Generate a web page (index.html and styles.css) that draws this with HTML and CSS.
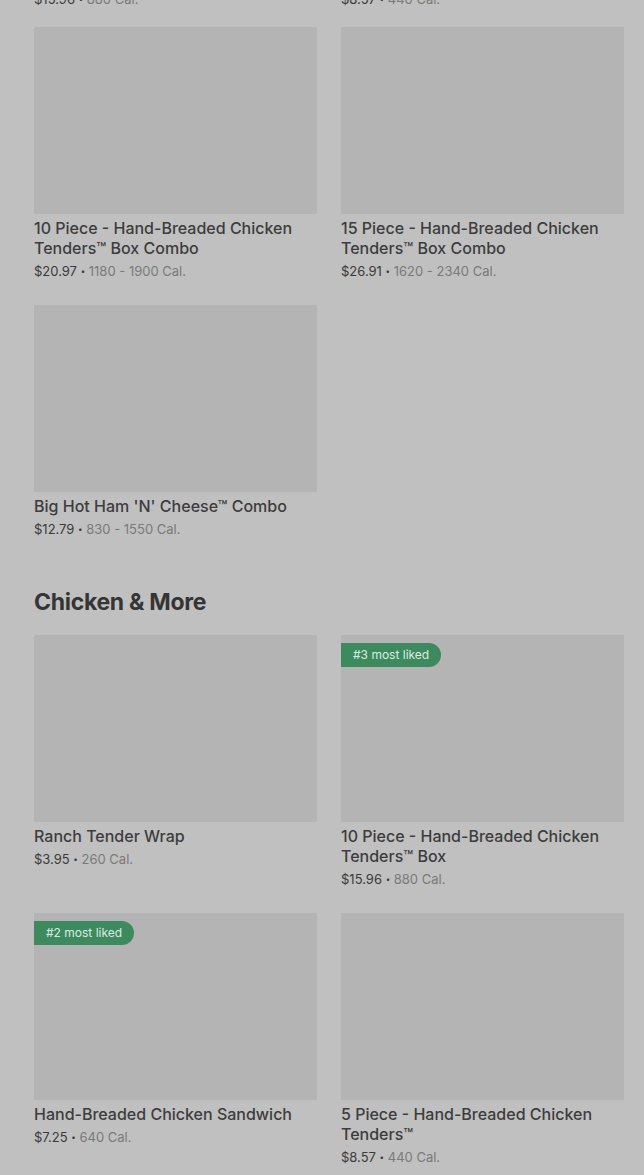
FILE: index.html
```html
<!DOCTYPE html>
<html>
<head>
    <title>Menu</title>
    <link rel="stylesheet" href="styles.css">
</head>
<body>
    <div class="menu">
        <div class="cut-row">
            <span class="price">$15.96 <span class="dot">•</span> <span class="cal">880 Cal.</span></span>
            <span class="price">$8.57 <span class="dot">•</span> <span class="cal">440 Cal.</span></span>
        </div>

        <div class="grid">
            <div class="card">
                <div class="thumb"></div>
                <div class="name">10 Piece - Hand-Breaded Chicken Tenders™ Box Combo</div>
                <div class="price">$20.97 <span class="dot">•</span> <span class="cal">1180 - 1900 Cal.</span></div>
            </div>
            <div class="card">
                <div class="thumb"></div>
                <div class="name">15 Piece - Hand-Breaded Chicken Tenders™ Box Combo</div>
                <div class="price">$26.91 <span class="dot">•</span> <span class="cal">1620 - 2340 Cal.</span></div>
            </div>
            <div class="card">
                <div class="thumb"></div>
                <div class="name">Big Hot Ham 'N' Cheese™ Combo</div>
                <div class="price">$12.79 <span class="dot">•</span> <span class="cal">830 - 1550 Cal.</span></div>
            </div>
        </div>

        <h2 class="section-title">Chicken &amp; More</h2>

        <div class="grid">
            <div class="card">
                <div class="thumb"></div>
                <div class="name">Ranch Tender Wrap</div>
                <div class="price">$3.95 <span class="dot">•</span> <span class="cal">260 Cal.</span></div>
            </div>
            <div class="card">
                <div class="thumb"><span class="badge">#3 most liked</span></div>
                <div class="name">10 Piece - Hand-Breaded Chicken Tenders™ Box</div>
                <div class="price">$15.96 <span class="dot">•</span> <span class="cal">880 Cal.</span></div>
            </div>
            <div class="card">
                <div class="thumb"><span class="badge">#2 most liked</span></div>
                <div class="name">Hand-Breaded Chicken Sandwich</div>
                <div class="price">$7.25 <span class="dot">•</span> <span class="cal">640 Cal.</span></div>
            </div>
            <div class="card">
                <div class="thumb"></div>
                <div class="name">5 Piece - Hand-Breaded Chicken Tenders™</div>
                <div class="price">$8.57 <span class="dot">•</span> <span class="cal">440 Cal.</span></div>
            </div>
        </div>
    </div>
</body>
</html>
```

FILE: styles.css
```css
body {
    margin: 0;
    background-color: #c0c0c0;
    font-family: Inter, "Liberation Sans", sans-serif;
    color: #3a3a3a;
}
.menu {
    padding: 0 20px 0 34px;
}
.cut-row {
    display: grid;
    grid-template-columns: 1fr 1fr;
    column-gap: 24px;
    margin-top: -14px;
    height: 41px;
}
.grid {
    display: grid;
    grid-template-columns: 1fr 1fr;
    column-gap: 24px;
    row-gap: 25px;
}
.card {
    display: flex;
    flex-direction: column;
}
.thumb {
    position: relative;
    height: 187px;
    background-color: #b4b4b4;
}
.badge {
    position: absolute;
    top: 8px;
    left: 0;
    height: 24px;
    line-height: 24px;
    padding: 0 12px;
    border-radius: 0 12px 12px 0;
    background-color: #3e8a5f;
    color: #dcebe2;
    font-size: 12px;
}
.name {
    margin-top: 4px;
    font-size: 16px;
    font-weight: 500;
    line-height: 20px;
    color: #3d3d3d;
}
.price {
    margin-top: 4px;
    font-size: 13px;
    line-height: 18px;
    color: #3a3a3a;
}
.dot {
    font-size: 8px;
    vertical-align: 2px;
}
.cal {
    color: #7a7a7a;
}
.section-title {
    margin: 48px 0 17px;
    font-family: Inter, "Liberation Sans", sans-serif;
    font-size: 23px;
    font-weight: 700;
    line-height: 32px;
    letter-spacing: -0.3px;
    color: #353535;
}
```
